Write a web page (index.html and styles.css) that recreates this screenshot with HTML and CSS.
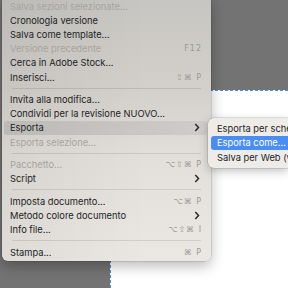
FILE: index.html
```html
<!DOCTYPE html>
<html lang="it">
<head>
    <meta charset="UTF-8">
    <title>File menu</title>
    <link rel="stylesheet" href="styles.css">
</head>
<body>
    <!-- Pasteboard with the document page -->
    <div class="canvas">
        <div class="page"></div>
    </div>

    <!-- File menu -->
    <div class="menu">
        <div class="item disabled"><span>Salva sezioni selezionate...</span></div>
        <div class="item"><span>Cronologia versione</span></div>
        <div class="item"><span>Salva come template...</span></div>
        <div class="item disabled"><span>Versione precedente</span><span class="key">F12</span></div>
        <div class="item"><span>Cerca in Adobe Stock...</span></div>
        <div class="item"><span>Inserisci...</span><span class="key">⇧⌘ P</span></div>
        <div class="sep"></div>
        <div class="item"><span>Invita alla modifica...</span></div>
        <div class="item"><span>Condividi per la revisione NUOVO...</span></div>
        <div class="item active"><span>Esporta</span>
            <svg class="chev" width="6" height="9" viewBox="0 0 6 9"><path d="M1.3 1l3.2 3.5L1.3 8" fill="none" stroke="#2a2a2a" stroke-width="1.5"/></svg>
        </div>
        <div class="item disabled"><span>Esporta selezione...</span></div>
        <div class="sep"></div>
        <div class="item disabled"><span>Pacchetto...</span><span class="key">⌥⇧⌘ P</span></div>
        <div class="item"><span>Script</span>
            <svg class="chev" width="6" height="9" viewBox="0 0 6 9"><path d="M1.3 1l3.2 3.5L1.3 8" fill="none" stroke="#2a2a2a" stroke-width="1.5"/></svg>
        </div>
        <div class="sep"></div>
        <div class="item"><span>Imposta documento...</span><span class="key">⌥⌘ P</span></div>
        <div class="item"><span>Metodo colore documento</span>
            <svg class="chev" width="6" height="9" viewBox="0 0 6 9"><path d="M1.3 1l3.2 3.5L1.3 8" fill="none" stroke="#2a2a2a" stroke-width="1.5"/></svg>
        </div>
        <div class="item"><span>Info file...</span><span class="key">⌥⇧⌘ I</span></div>
        <div class="sep"></div>
        <div class="item"><span>Stampa...</span><span class="key">⌘ P</span></div>
    </div>

    <!-- Esporta submenu -->
    <div class="submenu">
        <div class="item"><span>Esporta per schermi...</span></div>
        <div class="item selected"><span>Esporta come...</span></div>
        <div class="item"><span>Salva per Web (versione precedente)...</span></div>
    </div>
</body>
</html>
```
FILE: styles.css
```css
/* Basic reset */
* {
    margin: 0;
    padding: 0;
    box-sizing: border-box;
}

body {
    font-family: Inter, "Noto Sans", "DejaVu Sans", sans-serif;
    background-color: #737373;
    width: 288px;
    height: 288px;
    overflow: hidden;
    position: relative;
}

/* Pasteboard */
.canvas {
    display: flex;
    height: 288px;
    padding-top: 90px;
    padding-left: 110px;
}

.page {
    flex: 1;
    background-color: #fff;
    border-top: 1px dashed #4a8fe6;
    border-left: 1px dashed #4a8fe6;
}

/* Main menu */
.menu {
    position: absolute;
    left: 2px;
    top: -4px;
    width: 209px;
    padding: 3px 4px 1.6px 2px;
    border-radius: 0 0 6px 6px;
    background:
        linear-gradient(to right, rgba(0, 0, 0, 0.05), rgba(0, 0, 0, 0) 70%),
        linear-gradient(to bottom, #c7c5c1 0%, #d3d0cc 35%, #e2dfdb 60%, #ebe8e4 100%);
    box-shadow: 0 0 0 0.5px rgba(0, 0, 0, 0.2), 0 5px 14px rgba(0, 0, 0, 0.28);
}

.item {
    display: flex;
    align-items: center;
    justify-content: space-between;
    height: 14.2px;
    padding: 0 6px 0 6px;
    border-radius: 3px;
    font-size: 9.3px;
    color: #232323;
    white-space: nowrap;
}

.item.disabled {
    color: #a6a4a1;
}

.item.active {
    background: linear-gradient(to right, #bcbab7, #cfccc9);
}

.key {
    font-family: "DejaVu Sans", sans-serif;
    font-size: 8px;
    color: #9b9996;
    letter-spacing: 1px;
    margin-right: -1px;
}

.chev {
    margin-right: 1px;
}

.sep {
    height: 1px;
    margin: 3.6px 6px 3.7px 8px;
    background-color: rgba(0, 0, 0, 0.1);
}

/* Submenu, cut by the window edge */
.submenu {
    position: absolute;
    left: 208px;
    right: 0;
    top: 117.7px;
    overflow: hidden;
    padding: 3.5px 0 3px 2.5px;
    border-radius: 6px 0 0 6px;
    background-color: #eeece9;
    box-shadow: 0 0 0 0.5px rgba(0, 0, 0, 0.18), 0 3px 10px rgba(0, 0, 0, 0.25);
}

.submenu .item {
    height: 14.5px;
    padding-left: 6.5px;
    border-radius: 3px 0 0 3px;
}

.submenu .item.selected {
    background-color: #4b8ef3;
    color: #fff;
}
```
